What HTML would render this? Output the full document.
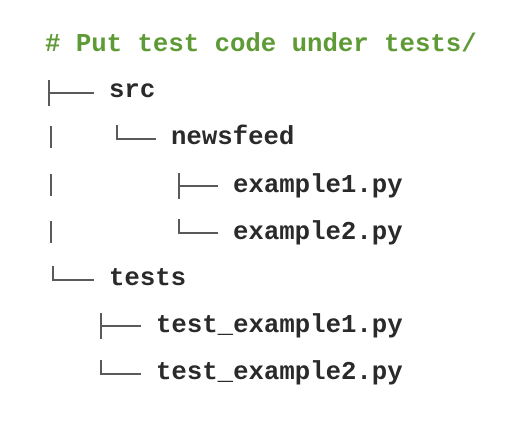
<!DOCTYPE html>
<html><head><style>
body{margin:0;width:523px;height:424px;background:#fff;position:relative;overflow:hidden}
.t{position:absolute;font-family:"Liberation Mono",monospace;font-weight:bold;font-size:25.7px;color:#2a2a2a;line-height:30px;white-space:pre}
.g{color:#5e9a35}
.v,.h{position:absolute;background:#5a5a5a}
.v{width:2px}.h{height:2px}
</style></head><body>
<div class="t g" style="left:45px;top:30px"># Put test code under tests/</div>

<div class="v" style="left:48px;top:80px;height:26px"></div><div class="h" style="left:48px;top:92px;width:46px"></div>
<div class="t" style="left:109px;top:76px">src</div>

<div class="v" style="left:50px;top:126px;height:22px"></div>
<div class="v" style="left:116px;top:125px;height:15px"></div><div class="h" style="left:116px;top:138px;width:40px"></div>
<div class="t" style="left:171px;top:123px">newsfeed</div>

<div class="v" style="left:50px;top:174px;height:22px"></div>
<div class="v" style="left:178px;top:173px;height:26px"></div><div class="h" style="left:178px;top:185px;width:40px"></div>
<div class="t" style="left:233px;top:171px">example1.py</div>

<div class="v" style="left:50px;top:221px;height:22px"></div>
<div class="v" style="left:178px;top:219px;height:15px"></div><div class="h" style="left:178px;top:232px;width:40px"></div>
<div class="t" style="left:233px;top:218px">example2.py</div>

<div class="v" style="left:52px;top:266px;height:15px"></div><div class="h" style="left:52px;top:279px;width:42px"></div>
<div class="t" style="left:109px;top:264px">tests</div>

<div class="v" style="left:100px;top:313px;height:26px"></div><div class="h" style="left:100px;top:325px;width:41px"></div>
<div class="t" style="left:156px;top:311px">test_example1.py</div>

<div class="v" style="left:100px;top:360px;height:15px"></div><div class="h" style="left:100px;top:373px;width:41px"></div>
<div class="t" style="left:156px;top:358px">test_example2.py</div>
</body></html>
